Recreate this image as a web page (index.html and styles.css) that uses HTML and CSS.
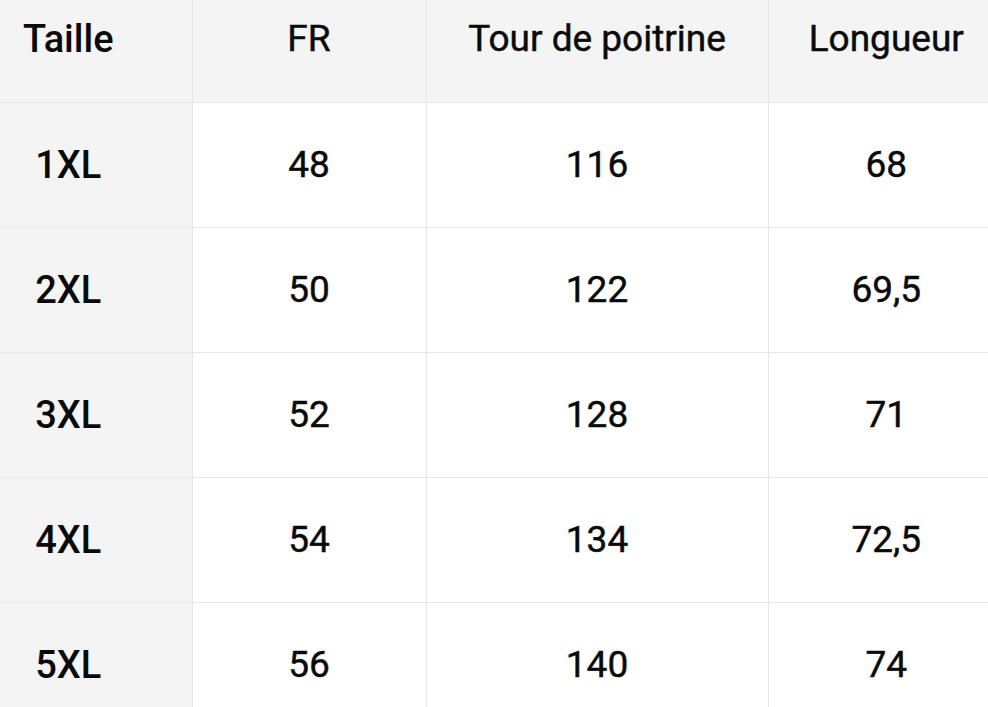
FILE: index.html
```html
<!DOCTYPE html>
<html lang="fr">
<head>
<meta charset="utf-8">
<title>Guide des tailles</title>
<link rel="stylesheet" href="styles.css">
</head>
<body>
<table class="size-table">
  <colgroup>
    <col class="c1"><col class="c2"><col class="c3"><col class="c4">
  </colgroup>
  <thead>
    <tr class="head">
      <th class="first">Taille</th>
      <th>FR</th>
      <th>Tour de poitrine</th>
      <th class="last">Longueur</th>
    </tr>
  </thead>
  <tbody>
    <tr><th class="first">1XL</th><td>48</td><td>116</td><td class="last">68</td></tr>
    <tr><th class="first">2XL</th><td>50</td><td>122</td><td class="last">69,5</td></tr>
    <tr><th class="first">3XL</th><td>52</td><td>128</td><td class="last">71</td></tr>
    <tr><th class="first">4XL</th><td>54</td><td>134</td><td class="last">72,5</td></tr>
    <tr><th class="first">5XL</th><td>56</td><td>140</td><td class="last">74</td></tr>
  </tbody>
</table>
</body>
</html>
```

FILE: styles.css
```css
html, body {
  margin: 0;
  padding: 0;
  background: #ffffff;
  overflow: hidden;
}

.size-table {
  border-collapse: collapse;
  table-layout: fixed;
  width: 988px;
  font-family: Roboto, "Liberation Sans", Arial, sans-serif;
  font-size: 37px;
  color: #0a0a0a;
}

.c1 { width: 192px; }
.c2 { width: 234px; }
.c3 { width: 342px; }
.c4 { width: 220px; }

.size-table th,
.size-table td {
  border: 1px solid #e7e7e7;
  text-align: center;
  vertical-align: middle;
  padding: 0;
  height: 125px;
  box-sizing: border-box;
  white-space: nowrap;
  font-weight: 400;
  -webkit-text-stroke: 0.45px #0a0a0a;
}

.head th {
  height: 102px;
  background: #f4f4f4;
  padding-bottom: 24px;
  border-top: none;
}

.size-table th.first {
  background: #f4f4f4;
  font-size: 38px;
  font-weight: 500;
  -webkit-text-stroke: 0;
  padding-right: 55px;
  border-left: none;
}

.size-table .last {
  padding-left: 16px;
  border-right: none;
}
```
